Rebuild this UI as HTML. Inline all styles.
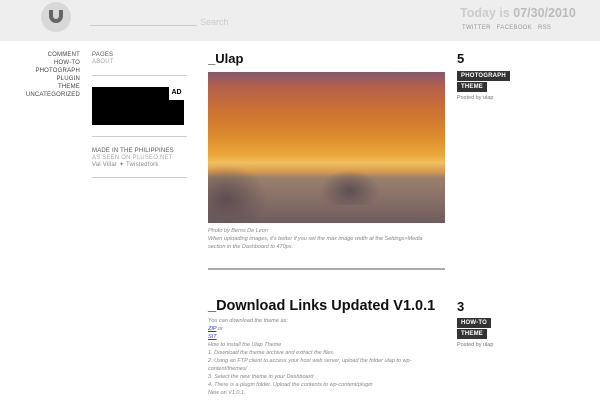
<!DOCTYPE html>
<html><head><style>
*{margin:0;padding:0;box-sizing:border-box}
body{width:600px;height:400px;overflow:hidden;background:#fff;font-family:"Liberation Sans",sans-serif;position:relative}
.a{position:absolute;white-space:nowrap}
.hdr{position:absolute;left:0;top:0;width:600px;height:41px;background:#eeeeee}
.cat{font-size:6px;color:#444;text-align:right;right:520px;line-height:8px;letter-spacing:.2px}
.sm{font-size:6px;line-height:7px;letter-spacing:.2px}
.hr{position:absolute;left:92px;width:95px;height:1px;background:#ccc}
.tag{position:absolute;left:457px;height:10px;background:#333;color:#fff;font-size:6px;font-weight:bold;line-height:10px;padding:0 4px;letter-spacing:.2px}
.it{font-style:italic;font-size:5.5px;color:#888;line-height:8px}
</style></head><body>
<div class="hdr"></div>
<div class="a" style="left:41px;top:2px;width:30px;height:30px;border-radius:50%;background:#d8d8d8"></div>
<div class="a" style="left:49px;top:10px;width:14px;height:13px;border:4px solid #666;border-top:none;border-radius:0 0 7px 7px"></div>
<div class="a" style="left:90px;top:25px;width:107px;height:1px;background:#ccc"></div>
<div class="a" style="left:200px;top:17px;font-size:9px;color:#ccc">Search</div>
<div class="a" style="left:460px;top:6px;font-size:12.5px;font-weight:bold;color:#ccc">Today is <span style="color:#bbb">07/30/2010</span></div>
<div class="a" style="left:462px;top:25px;font-size:6px;color:#999;letter-spacing:.3px">TWITTER&nbsp;&nbsp; FACEBOOK&nbsp;&nbsp; RSS</div>

<div class="a cat" style="top:51px">COMMENT<br>HOW-TO<br>PHOTOGRAPH<br>PLUGIN<br>THEME<br>UNCATEGORIZED</div>

<div class="a sm" style="left:92px;top:52px;color:#555">PAGES<br><span style="color:#aaa">ABOUT</span></div>
<div class="hr" style="top:75px"></div>
<div class="a" style="left:92px;top:87px;width:92px;height:38px;background:#000"></div>
<div class="a" style="left:169px;top:87px;width:15px;height:13px;background:#fff;font-size:7px;font-weight:bold;line-height:12px;text-align:center">AD</div>
<div class="hr" style="top:136px"></div>
<div class="a sm" style="left:92px;top:148px;color:#555">MADE IN THE PHILIPPINES<br><span style="color:#aaa">AS SEEN ON PLUSEO.NET</span><br><span style="color:#888">Val Villar ✦ Twistedfork</span></div>
<div class="hr" style="top:177px"></div>

<div class="a" style="left:208px;top:51px;font-size:13px;font-weight:bold;color:#111">_Ulap</div>
<div class="a" style="left:208px;top:72px;width:237px;height:151px;background:linear-gradient(180deg,#86586c 0%,#b4604a 10%,#cc7034 25%,#dc8a2c 42%,#eaa83a 55%,#f0c060 60%,#d89a50 66%,#9a806c 70%,#8a7268 82%,#6e5c5e 100%)"></div>
<div class="a" style="left:208px;top:165px;width:60px;height:58px;background:radial-gradient(ellipse at 30% 60%,#5e4e52 0%,rgba(94,78,82,0) 70%)"></div>
<div class="a" style="left:320px;top:170px;width:60px;height:35px;background:radial-gradient(ellipse at 50% 60%,#5e4e52 0%,rgba(94,78,82,0) 70%)"></div>
<div class="a it" style="left:208px;top:227px">Photo by Berns De Leon<br>When uploading images, it's better if you set the max image width at the Settings>Media<br>section in the Dashboard to 470px.</div>
<div class="a" style="left:208px;top:268px;width:237px;height:2px;background:#aaa"></div>

<div class="a" style="left:208px;top:298px;font-size:14.5px;font-weight:bold;color:#111">_Download Links Updated V1.0.1</div>
<div class="a it" style="left:208px;top:317px">You can download the theme as:<br><span style="color:#33c;text-decoration:underline">ZIP</span> or<br><span style="color:#33c;text-decoration:underline">SIT</span><br>How to install the Ulap Theme<br>1. Download the theme archive and extract the files.<br>2. Using an FTP client to access your host web server, upload the folder ulap to wp-<br>content/themes/<br>3. Select the new theme in your Dashboard<br>4. There is a plugin folder. Upload the contents to wp-content/plugin<br>New on V1.0.1.</div>

<div class="a" style="left:457px;top:51px;font-size:13px;font-weight:bold;color:#111">5</div>
<div class="tag" style="top:71px">PHOTOGRAPH</div>
<div class="tag" style="top:82px">THEME</div>
<div class="a" style="left:457px;top:95px;font-size:5.5px;color:#777">Posted by ulap</div>

<div class="a" style="left:457px;top:299px;font-size:13px;font-weight:bold;color:#111">3</div>
<div class="tag" style="top:318px">HOW-TO</div>
<div class="tag" style="top:329px">THEME</div>
<div class="a" style="left:457px;top:342px;font-size:5.5px;color:#777">Posted by ulap</div>
</body></html>
